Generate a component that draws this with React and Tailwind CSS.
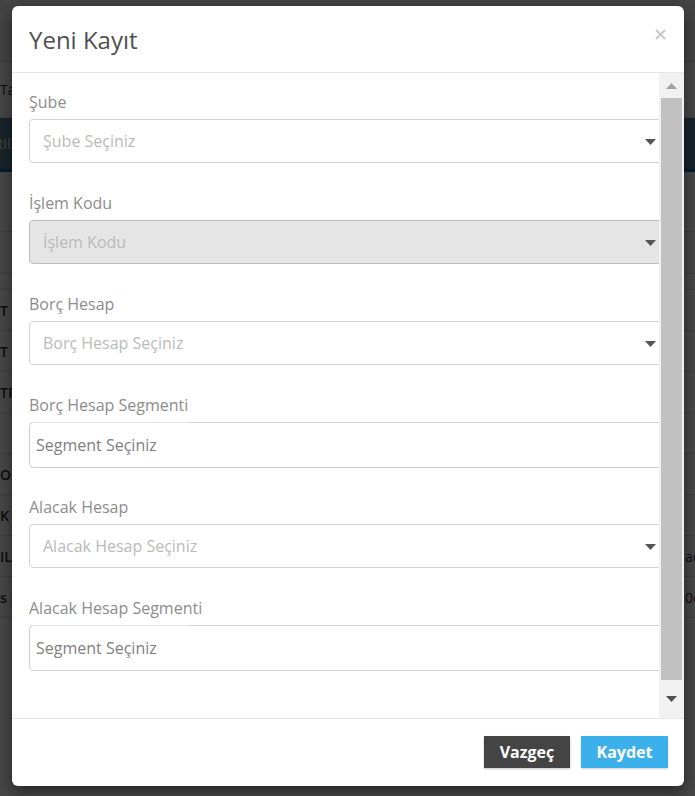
import React from 'react'

const fields = [
  { label: 'Şube', value: 'Şube Seçiniz', kind: 'select' },
  { label: 'İşlem Kodu', value: 'İşlem Kodu', kind: 'disabled' },
  { label: 'Borç Hesap', value: 'Borç Hesap Seçiniz', kind: 'select' },
  { label: 'Borç Hesap Segmenti', value: 'Segment Seçiniz', kind: 'text' },
  { label: 'Alacak Hesap', value: 'Alacak Hesap Seçiniz', kind: 'select' },
  { label: 'Alacak Hesap Segmenti', value: 'Segment Seçiniz', kind: 'text' },
]

// rows of the page that sits behind the backdrop (only the edges show)
const pageRows = [
  { left: 'T', right: '' },
  { left: 'T F', right: '' },
  { left: 'TR', right: '' },
  { left: '', right: '' },
  { left: 'O', right: '' },
  { left: 'K', right: '' },
  { left: 'IL-', right: 'ac' },
  { left: 's E', right: '0c' },
]

function Caret({ className }) {
  return (
    <svg width="11" height="6" viewBox="0 0 11 6" className={className}>
      <path d="M0 0 H11 L5.5 6 Z" fill="currentColor" />
    </svg>
  )
}

function Field({ label, value, kind, last }) {
  const isText = kind === 'text'
  return (
    <div className={last ? '' : isText ? 'mb-[28px]' : 'mb-[29px]'}>
      <div className="text-[16px] leading-[22px] text-[#8c8c8c] mb-[6px]">{label}</div>
      <div
        className={`relative w-[636px] flex items-center rounded-[4px] border ${
          isText ? 'h-[46px] border-[#cfcfcf] pl-[6px]' : 'h-[44px] pl-[13px]'
        } ${kind === 'disabled' ? 'bg-[#e5e5e5] border-[#bdbdbd]' : 'bg-white'} ${
          kind === 'select' ? 'border-[#d2d2d2]' : ''
        }`}
      >
        {isText && (
          <div className="absolute left-0 top-[-1px] h-px w-[160px] bg-[#e6e6e6]" />
        )}
        <span className={`text-[16px] ${isText ? 'text-[#808080]' : 'text-[#bababa]'}`}>
          {value}
        </span>
        {!isText && <Caret className="absolute right-[8px] top-[19px] text-[#555]" />}
      </div>
    </div>
  )
}

export default function App() {
  return (
    <div className="relative h-[796px] w-[695px] overflow-hidden bg-white font-['Open_Sans',sans-serif]">
      {/* page behind the modal */}
      <div className="flex flex-col text-[14px] text-[#333]">
        <div className="h-[62px] border-b border-[#ddd] bg-[#f5f5f5]" />
        <div className="h-[56px] flex items-center border-b border-[#ddd]">
          <span className="w-[12px] overflow-hidden whitespace-nowrap">Ta</span>
        </div>
        <div className="h-[54px] flex items-center bg-[#5e7f96] text-white text-[15px] border-b-[3px] border-[#0b6aa8]">
          <span className="w-[12px] overflow-hidden whitespace-nowrap -ml-[2px]">tik</span>
        </div>
        <div className="h-[60px] border-b border-[#ddd]" />
        <div className="h-[42px] border-b border-[#ddd]" />
        <div className="h-[16px] border-b border-[#ddd]" />
        {pageRows.map((r, i) => (
          <div key={i} className="h-[41px] flex items-center justify-between border-b border-[#ddd]">
            <span className="w-[12px] overflow-hidden whitespace-nowrap font-semibold">{r.left}</span>
            <span className="w-[10px] overflow-hidden whitespace-nowrap">{r.right}</span>
          </div>
        ))}
      </div>

      {/* backdrop */}
      <div className="absolute inset-0 bg-black/[0.72]" />

      {/* modal */}
      <div className="absolute left-[12px] top-[6px] w-[672px] h-[780px] flex flex-col rounded-[6px] bg-white shadow-[0_5px_15px_rgba(0,0,0,0.5)] overflow-hidden">
        <div className="h-[67px] shrink-0 flex items-center justify-between border-b border-[#e5e5e5] pl-[17px] pr-[18px]">
          <h4 className="text-[24px] leading-none text-[#505050] pt-[2px]">Yeni Kayıt</h4>
          <svg width="11" height="11" viewBox="0 0 11 11" className="text-[#c8c8c8] mb-[10px]">
            <path d="M1 1 L10 10 M10 1 L1 10" stroke="currentColor" strokeWidth="2" />
          </svg>
        </div>

        <div className="h-[646px] shrink-0 flex border-b border-[#e5e5e5]">
          <div className="flex-1 overflow-hidden pl-[17px] pt-[18px]">
            {fields.map((f, i) => (
              <Field key={i} {...f} last={i === fields.length - 1} />
            ))}
          </div>
          {/* scrollbar */}
          <div className="w-[25px] shrink-0 flex flex-col bg-[#f1f1f1]">
            <div className="h-[25px] flex items-center justify-center">
              <svg width="11" height="6" viewBox="0 0 11 6" className="text-[#a3a3a3]">
                <path d="M0 6 H11 L5.5 0 Z" fill="currentColor" />
              </svg>
            </div>
            <div className="h-[582px] mx-[2px] bg-[#c1c1c1]" />
            <div className="flex-1 flex items-center justify-center">
              <Caret className="text-[#505050]" />
            </div>
          </div>
        </div>

        <div className="flex-1 flex justify-end items-start gap-[11px] pt-[17px] pr-[16px]">
          <button className="h-[32px] w-[86px] bg-[#444444] text-white text-[16px] font-bold shadow-[0_1px_2px_rgba(0,0,0,0.25)]">
            Vazgeç
          </button>
          <button className="h-[32px] w-[87px] bg-[#3bb0eb] text-white text-[16px] font-bold shadow-[0_1px_2px_rgba(0,0,0,0.2)]">
            Kaydet
          </button>
        </div>
      </div>
    </div>
  )
}
